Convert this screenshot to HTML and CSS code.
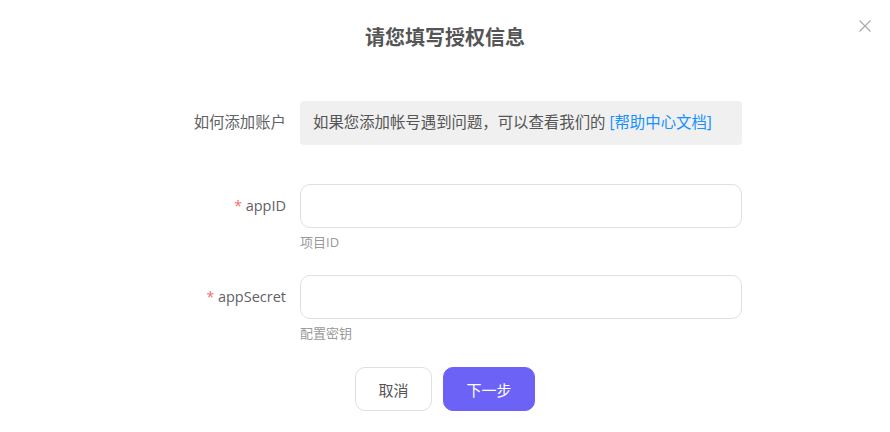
FILE: index.html
```html
<!DOCTYPE html>
<html lang="zh-CN">
<head>
<meta charset="utf-8">
<title>请您填写授权信息</title>
<link rel="stylesheet" href="styles.css">
</head>
<body>
<div class="dialog">
  <header class="dialog-header">
    <h1 class="dialog-title">请您填写授权信息</h1>
    <button class="close-btn" aria-label="关闭">
      <svg width="12" height="12" viewBox="0 0 12 12"><path d="M0.5 0.5 L11.5 11.5 M11.5 0.5 L0.5 11.5" stroke="#a8a8a8" stroke-width="1.1" fill="none"/></svg>
    </button>
  </header>
  <form class="form">
    <div class="row row-info">
      <label class="label label-cjk">如何添加账户</label>
      <div class="control">
        <div class="info-box">如果您添加帐号遇到问题，可以查看我们的 <a class="link" href="#">[帮助中心文档]</a></div>
      </div>
    </div>
    <div class="row row-id">
      <label class="label"><span class="req">*</span> appID</label>
      <div class="control">
        <input class="input" type="text">
        <div class="hint">项目ID</div>
      </div>
    </div>
    <div class="row row-secret">
      <label class="label"><span class="req">*</span> appSecret</label>
      <div class="control">
        <input class="input" type="text">
        <div class="hint">配置密钥</div>
      </div>
    </div>
  </form>
  <footer class="actions">
    <button class="btn btn-cancel" type="button">取消</button>
    <button class="btn btn-primary" type="button">下一步</button>
  </footer>
</div>
</body>
</html>
```
FILE: styles.css
```css
html, body {
  margin: 0;
  padding: 0;
  background: #fff;
}
body {
  font-family: "Open Sans", "Noto Sans CJK SC", sans-serif;
  color: #555;
  width: 890px;
  height: 432px;
  overflow: hidden;
}
.dialog {
  width: 890px;
}
.dialog-header {
  position: relative;
  height: 74px;
  display: flex;
  justify-content: center;
  align-items: flex-start;
}
.dialog-title {
  margin: 23px 0 0;
  font-size: 20px;
  line-height: 28px;
  font-weight: 700;
  color: #555;
  font-family: "Noto Sans CJK SC", sans-serif;
}
.close-btn {
  position: absolute;
  top: 20px;
  right: 19px;
  width: 12px;
  height: 12px;
  padding: 0;
  border: 0;
  background: none;
  display: flex;
}
.form {
  margin-left: 166px;
  width: 576px;
}
.row {
  display: flex;
  align-items: flex-start;
}
.label {
  width: 120px;
  flex: none;
  margin-right: 14px;
  text-align: right;
  font-size: 14.5px;
  line-height: 44px;
  color: #606266;
}
.label-cjk {
  font-size: 15.4px;
}
.req {
  color: #f56c6c;
  font-size: 14px;
}
.control {
  flex: 1;
}
.row-info {
  margin-top: 27px;
}
.info-box {
  height: 44px;
  box-sizing: border-box;
  background: #f0f0f0;
  border-radius: 4px;
  padding: 0 13px;
  font-size: 15.4px;
  line-height: 44px;
  color: #555;
  white-space: nowrap;
}
.link {
  color: #1890ff;
  text-decoration: none;
}
.row-id {
  margin-top: 39px;
}
.row-secret {
  margin-top: 24px;
}
.input {
  display: block;
  width: 442px;
  height: 44px;
  box-sizing: border-box;
  border: 1px solid #dcdfe6;
  border-radius: 10px;
  background: #fff;
  outline: none;
  padding: 0 12px;
  font-size: 15px;
}
.hint {
  margin-top: 5px;
  font-size: 13px;
  line-height: 18px;
  color: #999;
}
.actions {
  margin-top: 25px;
  display: flex;
  justify-content: center;
  gap: 11px;
}
.btn {
  height: 44px;
  box-sizing: border-box;
  border-radius: 10px;
  font-family: "Noto Sans CJK SC", sans-serif;
  font-size: 15px;
  cursor: pointer;
}
.btn-cancel {
  width: 77px;
  background: #fff;
  border: 1px solid #dcdfe6;
  color: #555;
}
.btn-primary {
  width: 92px;
  background: #6c63f6;
  border: 1px solid #6c63f6;
  color: #fff;
}
```
